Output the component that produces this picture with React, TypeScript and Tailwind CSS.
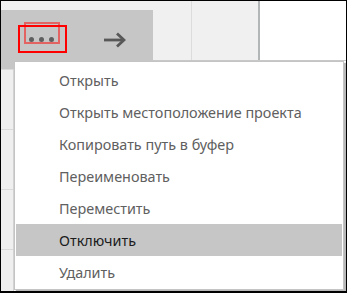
const items = [
  'Открыть',
  'Открыть местоположение проекта',
  'Копировать путь в буфер',
  'Переименовать',
  'Переместить',
  'Отключить',
  'Удалить',
]
const activeIndex = 5

function ArrowIcon() {
  return (
    <svg width="23" height="16" viewBox="0 0 23 16" fill="none" stroke="#585858" strokeWidth="2.8">
      <path d="M1 8 H21" />
      <path d="M14 1.5 L21 8 L14 14.5" />
    </svg>
  )
}

export default function App() {
  return (
    <div className="relative w-[347px] h-[293px] overflow-hidden bg-white border-black border-t border-x border-b-2 font-['Noto_Sans',sans-serif]">
      {/* toolbar */}
      <div className="flex h-[68px]">
        <div className="w-[152px] flex flex-col bg-[#f0f0f0]">
          <div className="h-[9px]" />
          <div className="flex-1 bg-[#c6c6c6] flex items-start pt-[22px]">
            <div className="flex items-center gap-[5px] pl-[28px] pt-[5px]">
              <span className="w-[5px] h-[5px] rounded-full bg-[#5f5f5f]" />
              <span className="w-[5px] h-[5px] rounded-full bg-[#5f5f5f]" />
              <span className="w-[5px] h-[5px] rounded-full bg-[#5f5f5f]" />
            </div>
            <div className="ml-[49px]">
              <ArrowIcon />
            </div>
          </div>
        </div>
        <div className="flex-1 flex flex-col">
          <div className="h-[60px] flex border-b border-[#c8c8c8]">
            <div className="w-[39px] bg-[#f0f0f0] border-r border-[#dcdcdc]" />
            <div className="w-[68px] bg-[#f0f0f0] border-r-2 border-[#b2b6b6]" />
            <div className="flex-1 bg-white" />
          </div>
        </div>
      </div>

      {/* list below */}
      <div className="flex">
        <div className="w-[13px] flex flex-col bg-[#efefef] border-r border-[#d2d2d2]">
          <div className="h-[60px] border-t border-[#dadada]" />
          <div className="h-[60px] border-t border-[#dadada]" />
          <div className="h-[60px] border-t border-[#dadada]" />
          <div className="h-[42px] border-t border-[#dadada]" />
        </div>
        <div className="flex-1" />
      </div>

      {/* annotation boxes */}
      <div className="absolute left-[23px] top-[21px] w-[36px] h-[22px] border-2 border-[rgba(255,0,0,0.5)]" />
      <div className="absolute left-[17px] top-[24px] w-[49px] h-[28px] border-2 border-[#ff0000]" />

      {/* context menu */}
      <div className="absolute left-[13px] top-[60px] w-[330px] h-[229px] bg-white border border-[#c4c4c4] shadow-[2px_2px_1px_rgba(0,0,0,0.28)] px-px pt-[2px]">
        {items.map((label, i) => (
          <div
            key={label}
            className={`h-[32px] flex items-center pl-[43px] pt-px text-[14.4px] ${
              i === activeIndex ? 'bg-[#c6c6c6] text-[#1c1c1c]' : 'text-[#606060]'
            }`}
          >
            {label}
          </div>
        ))}
      </div>
    </div>
  )
}
